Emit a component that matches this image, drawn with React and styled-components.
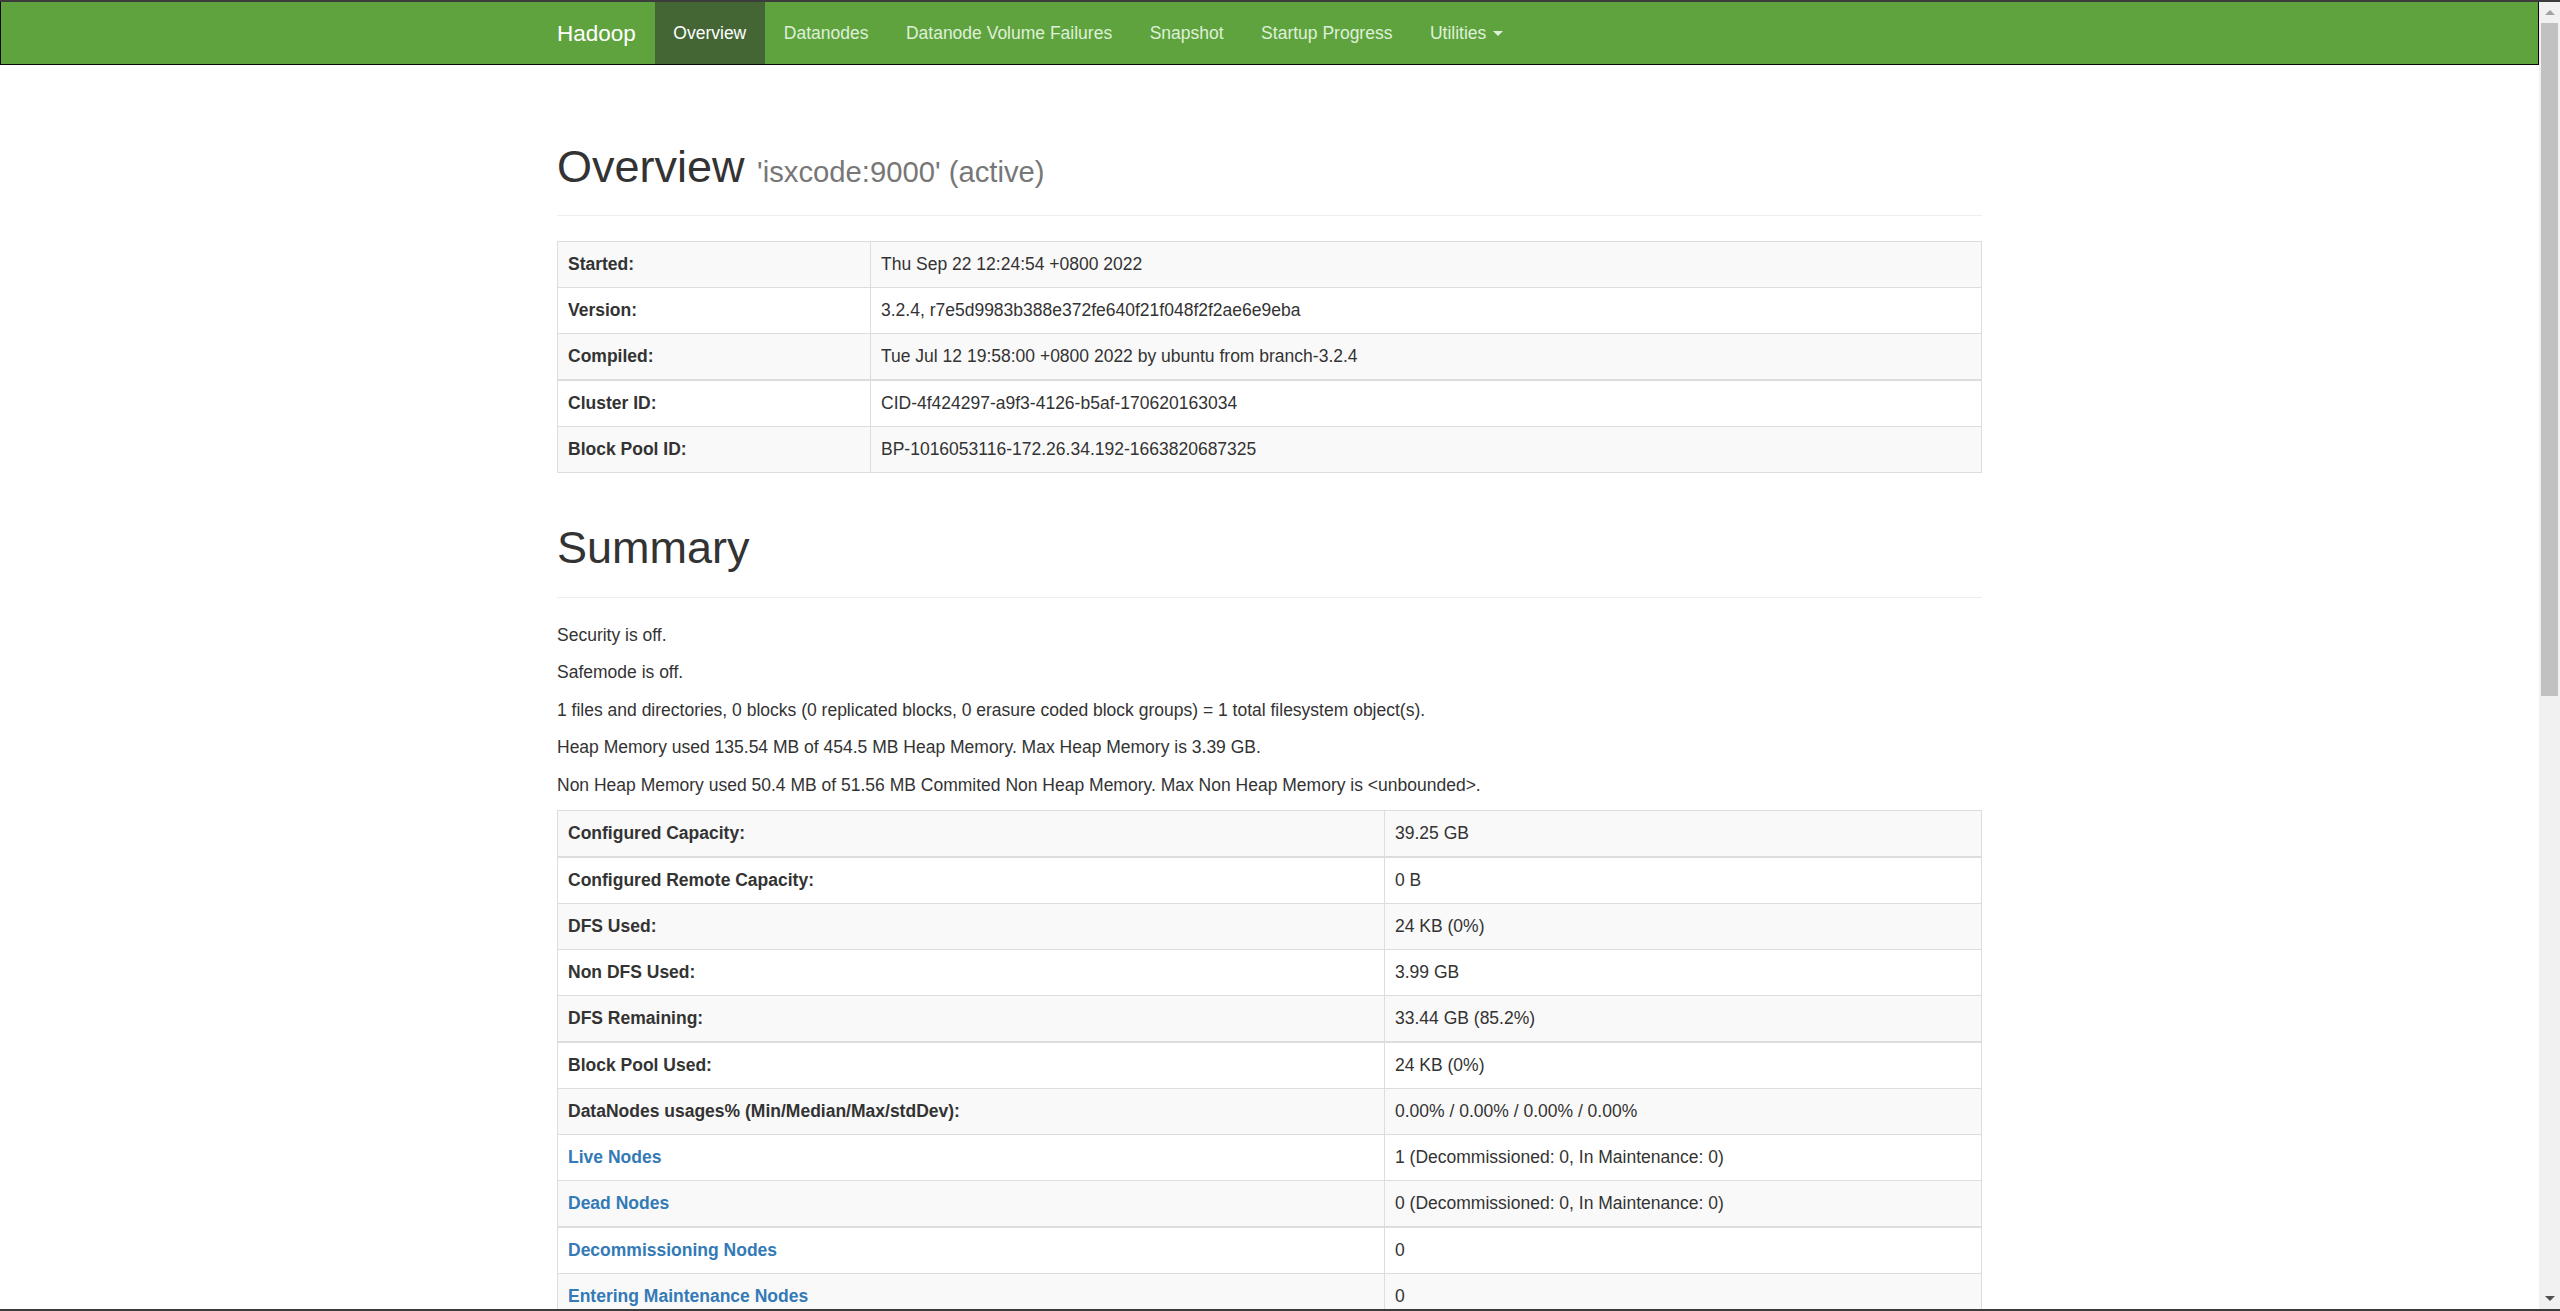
import styled, { createGlobalStyle, css } from 'styled-components';

const GlobalStyle = createGlobalStyle`
    * {
        box-sizing: border-box;
    }

    html, body {
        margin: 0;
        height: 100%;
        overflow: hidden;
    }

    body {
        font-family: "Liberation Sans", Arial, sans-serif;
        font-size: 17.5px;
        line-height: 25px;
        color: #333;
        background: #fff;
    }

    a {
        color: #337ab7;
        text-decoration: none;
    }
`;

const Shell = styled.div`
    display: flex;
    height: 100vh;
    border-top: 2px solid #3c3c3c;
    border-bottom: 2px solid #3c3c3c;
`;

const Page = styled.div`
    flex: 1;
    min-width: 0;
    overflow-y: auto;
    scrollbar-width: none;

    &::-webkit-scrollbar {
        display: none;
    }
`;

const ScrollBar = styled.div`
    width: 21px;
    flex: none;
    display: flex;
    flex-direction: column;
    background: #f1f1f1;
`;

const ScrollArrow = styled.div`
    height: 21px;
    display: flex;
    align-items: center;
    justify-content: center;

    &::before {
        content: "";
        width: 0;
        height: 0;
        border-left: 5px solid transparent;
        border-right: 5px solid transparent;
        ${(p) => p.$down
            ? css`border-top: 5px solid #505050;`
            : css`border-bottom: 5px solid #a3a3a3;`}
    }
`;

const ScrollTrack = styled.div`
    flex: 1;
    padding: 0 2px;
`;

const ScrollThumb = styled.div`
    height: 673px;
    background: #c1c1c1;
`;

const Navbar = styled.header`
    background-color: #5fa33e;
    border: 1px solid #080808;
    border-top: 0;
    margin-bottom: 27px;
`;

const NavInner = styled.div`
    width: 1462.5px;
    margin: 0 auto;
    padding: 0 18.75px;
    display: flex;
    align-items: stretch;
    min-height: 62px;
`;

const Brand = styled.a`
    margin-left: -18.75px;
    padding: 18.5px 18.75px;
    font-size: 22.5px;
    line-height: 25px;
    color: #fff;
`;

const NavList = styled.ul`
    display: flex;
    list-style: none;
    margin: 0;
    padding: 0;
`;

const NavLink = styled.a`
    display: flex;
    align-items: center;
    height: 100%;
    padding: 18.5px 18.75px;
    color: #dff0d8;

    ${(p) => p.$active && css`
        color: #fff;
        background-color: #446634;
    `}
`;

const Caret = styled.span`
    display: inline-block;
    width: 0;
    height: 0;
    margin-left: 7px;
    border-top: 5px solid;
    border-left: 5px solid transparent;
    border-right: 5px solid transparent;
`;

const Container = styled.main`
    width: 1462.5px;
    margin: 0 auto;
    padding: 0 18.75px;

    &::before {
        content: " ";
        display: table;
    }
`;

const PageHeader = styled.div`
    margin: 50px 0 25px;
    padding-bottom: 11.25px;
    border-bottom: 1px solid #eee;
`;

const Title = styled.h1`
    margin: 25px 0 12.5px;
    font-size: 45px;
    font-weight: 400;
    line-height: 1.1;
    color: #333;
`;

const Sub = styled.small`
    font-size: 65%;
    color: #777;
`;

const Para = styled.p`
    margin: 0 0 12.5px;
`;

const Table = styled.table`
    width: 100%;
    border-collapse: collapse;
    border-spacing: 0;
    margin-bottom: 25px;

    th, td {
        padding: 10px;
        line-height: 25px;
        text-align: left;
        vertical-align: top;
        border: 1px solid #ddd;
    }

    th {
        font-weight: 700;
    }

    tbody tr:nth-of-type(odd) {
        background-color: #f9f9f9;
    }

    ${(p) => p.$plain && css`
        th, td {
            border: 0;
            border-top: 1px solid #ddd;
        }

        thead th {
            border-top: 0;
            border-bottom: 2px solid #ddd;
            vertical-align: bottom;
        }

        tbody tr:nth-of-type(odd) {
            background-color: transparent;
        }
    `}
`;

const Row = styled.tr`
    ${(p) => p.$thick && css`
        th, td {
            border-top-width: 2px;
        }
    `}
`;

const Label = styled.th`
    width: ${(p) => p.$width || 'auto'};
`;

const Footer = styled.div`
    padding: 12px 0 20px;
`;

const navItems = ['Overview', 'Datanodes', 'Datanode Volume Failures', 'Snapshot', 'Startup Progress'];

const overviewRows = [
    ['Started:', 'Thu Sep 22 12:24:54 +0800 2022'],
    ['Version:', '3.2.4, r7e5d9983b388e372fe640f21f048f2f2ae6e9eba'],
    ['Compiled:', 'Tue Jul 12 19:58:00 +0800 2022 by ubuntu from branch-3.2.4'],
    ['Cluster ID:', 'CID-4f424297-a9f3-4126-b5af-170620163034'],
    ['Block Pool ID:', 'BP-1016053116-172.26.34.192-1663820687325'],
];

const summaryRows = [
    ['Configured Capacity:', '39.25 GB'],
    ['Configured Remote Capacity:', '0 B'],
    ['DFS Used:', '24 KB (0%)'],
    ['Non DFS Used:', '3.99 GB'],
    ['DFS Remaining:', '33.44 GB (85.2%)'],
    ['Block Pool Used:', '24 KB (0%)'],
    ['DataNodes usages% (Min/Median/Max/stdDev):', '0.00% / 0.00% / 0.00% / 0.00%'],
    ['Live Nodes', '1 (Decommissioned: 0, In Maintenance: 0)', true],
    ['Dead Nodes', '0 (Decommissioned: 0, In Maintenance: 0)', true],
    ['Decommissioning Nodes', '0', true],
    ['Entering Maintenance Nodes', '0', true],
    ['Total Datanode Volume Failures', '0 (0 B)', true],
    ['Number of Under-Replicated Blocks', '0'],
    ['Number of Blocks Pending Deletion (including replicas)', '0'],
    ['Block Deletion Start Time', 'Thu Sep 22 12:24:54 +0800 2022'],
    ['Last Checkpoint Time', 'Thu Sep 22 12:24:47 +0800 2022'],
    ['Enabled Erasure Coding Policies', 'RS-6-3-1024k'],
];

const InfoTable = ({ rows, labelWidth, thickFrom }) => (
    <Table>
        <tbody>
            {rows.map(([label, value, link], i) => (
                <Row key={label} $thick={i > 0 && (i - thickFrom) % 4 === 0}>
                    <Label $width={labelWidth}>
                        {link ? <a href="#tab-datanode">{label}</a> : label}
                    </Label>
                    <td>{value}</td>
                </Row>
            ))}
        </tbody>
    </Table>
);

const App = () => {
    return (
        <>
            <GlobalStyle />
            <Shell>
                <Page>
                    <Navbar>
                        <NavInner>
                            <Brand href="#">Hadoop</Brand>
                            <NavList>
                                {navItems.map((item, i) => (
                                    <li key={item}>
                                        <NavLink href="#" $active={i === 0}>{item}</NavLink>
                                    </li>
                                ))}
                                <li>
                                    <NavLink href="#">Utilities<Caret /></NavLink>
                                </li>
                            </NavList>
                        </NavInner>
                    </Navbar>

                    <Container>
                        <PageHeader>
                            <Title>Overview <Sub>'isxcode:9000' (active)</Sub></Title>
                        </PageHeader>
                        <InfoTable rows={overviewRows} labelWidth="313px" thickFrom={3} />

                        <PageHeader>
                            <Title>Summary</Title>
                        </PageHeader>
                        <Para>Security is off.</Para>
                        <Para>Safemode is off.</Para>
                        <Para>1 files and directories, 0 blocks (0 replicated blocks, 0 erasure coded block groups) = 1 total filesystem object(s).</Para>
                        <Para>Heap Memory used 135.54 MB of 454.5 MB Heap Memory. Max Heap Memory is 3.39 GB.</Para>
                        <Para>Non Heap Memory used 50.4 MB of 51.56 MB Commited Non Heap Memory. Max Non Heap Memory is &lt;unbounded&gt;.</Para>
                        <InfoTable rows={summaryRows} labelWidth="827px" thickFrom={1} />

                        <PageHeader>
                            <Title>NameNode Journal Status</Title>
                        </PageHeader>
                        <Para><b>Current transaction ID:</b> 2</Para>
                        <Table $plain>
                            <thead>
                                <tr><th>Journal Manager</th><th>State</th></tr>
                            </thead>
                            <tbody>
                                <tr>
                                    <td>FileJournalManager(root=/data/hadoop/dfs/name)</td>
                                    <td>EditLogFileOutputStream(/data/hadoop/dfs/name/current/edits_inprogress_0000000000000000001)</td>
                                </tr>
                            </tbody>
                        </Table>

                        <PageHeader>
                            <Title>NameNode Storage</Title>
                        </PageHeader>
                        <Table $plain>
                            <thead>
                                <tr><th>Storage Directory</th><th>Type</th><th>State</th></tr>
                            </thead>
                            <tbody>
                                <tr><td>/data/hadoop/dfs/name</td><td>IMAGE_AND_EDITS</td><td>Active</td></tr>
                            </tbody>
                        </Table>

                        <PageHeader>
                            <Title>DFS Storage Types</Title>
                        </PageHeader>
                        <Table $plain>
                            <thead>
                                <tr>
                                    <th>Storage Type</th>
                                    <th>Configured Capacity</th>
                                    <th>Capacity Used</th>
                                    <th>Capacity Remaining</th>
                                    <th>Block Pool Used</th>
                                    <th>Nodes In Service</th>
                                </tr>
                            </thead>
                            <tbody>
                                <tr>
                                    <td>DISK</td>
                                    <td>39.25 GB</td>
                                    <td>24 KB (0%)</td>
                                    <td>33.44 GB (85.2%)</td>
                                    <td>24 KB</td>
                                    <td>1</td>
                                </tr>
                            </tbody>
                        </Table>

                        <Footer>
                            <Para>Hadoop, 2022.</Para>
                        </Footer>
                    </Container>
                </Page>
                <ScrollBar>
                    <ScrollArrow />
                    <ScrollTrack>
                        <ScrollThumb />
                    </ScrollTrack>
                    <ScrollArrow $down />
                </ScrollBar>
            </Shell>
        </>
    );
};

export default App;
